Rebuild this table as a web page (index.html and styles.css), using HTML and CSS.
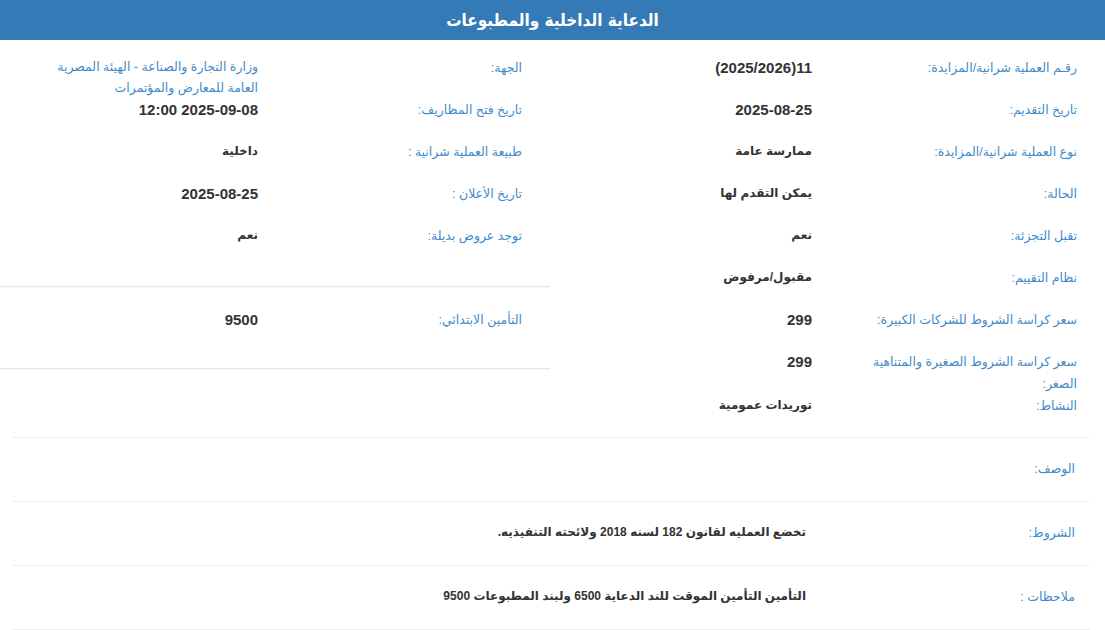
FILE: index.html
```html
<!DOCTYPE html>
<html lang="ar" dir="rtl">
<head>
<meta charset="utf-8">
<title>الدعاية الداخلية والمطبوعات</title>
<link rel="stylesheet" href="styles.css">
</head>
<body>
<header class="title-bar">الدعاية الداخلية والمطبوعات</header>
<main class="details">
  <div class="cols">
    <section class="col col-start">
      <div class="row"><div class="label">رقـم العملية شرانية/المزايدة:</div><div class="value num">11(2025/2026)</div></div>
      <div class="row"><div class="label">تاريخ التقديم:</div><div class="value num">2025-08-25</div></div>
      <div class="row"><div class="label">نوع العملية شرانية/المزايدة:</div><div class="value">ممارسة عامة</div></div>
      <div class="row"><div class="label">الحالة:</div><div class="value">يمكن التقدم لها</div></div>
      <div class="row"><div class="label">تقبل التجزئة:</div><div class="value">نعم</div></div>
      <div class="row"><div class="label">نظام التقييم:</div><div class="value">مقبول/مرفوض</div></div>
      <div class="row"><div class="label">سعر كراسة الشروط للشركات الكبيرة:</div><div class="value num">299</div></div>
      <div class="row"><div class="label">سعر كراسة الشروط الصغيرة والمتناهية الصغر:</div><div class="value num">299</div></div>
      <div class="row"><div class="label">النشاط:</div><div class="value">توريدات عمومية</div></div>
    </section>
    <section class="col col-end">
      <div class="row"><div class="label">الجهة:</div><div class="value org">وزارة التجارة والصناعة - الهيئة المصرية العامة للمعارض والمؤتمرات</div></div>
      <div class="row"><div class="label">تاريخ فتح المظاريف:</div><div class="value num">2025-09-08 12:00</div></div>
      <div class="row"><div class="label">طبيعة العملية شرانية :</div><div class="value">داخلية</div></div>
      <div class="row"><div class="label">تاريخ الأعلان :</div><div class="value num">2025-08-25</div></div>
      <div class="row"><div class="label">توجد عروض بديلة:</div><div class="value">نعم</div></div>
      <hr class="sep">
      <div class="row"><div class="label">التأمين الابتدائي:</div><div class="value num">9500</div></div>
      <hr class="sep">
    </section>
  </div>
  <section class="wide">
    <div class="wide-row"><div class="label">الوصف:</div><div class="value"></div></div>
    <div class="wide-row"><div class="label">الشروط:</div><div class="value">تخضع العمليه لقانون 182 لسنه 2018 ولائحته التنفيذيه.</div></div>
    <div class="wide-row"><div class="label">ملاحظات :</div><div class="value">التأمين التأمين الموقت للند الدعاية 6500 ولبند المطبوعات 9500</div></div>
  </section>
</main>
</body>
</html>
```

FILE: styles.css
```css
* { box-sizing: border-box; }

body {
  margin: 0;
  background: #fff;
  color: #333;
  font-family: "Liberation Sans", "DejaVu Sans", Arial, sans-serif;
  font-size: 13px;
}

.title-bar {
  height: 40px;
  background: #337ab7;
  color: #fff;
  text-align: center;
  font-family: "DejaVu Sans Condensed", "DejaVu Sans", sans-serif;
  font-weight: bold;
  font-size: 17px;
  line-height: 40px;
}

.cols {
  display: grid;
  grid-template-columns: 555px 550px;
  padding-top: 17px;
}

.col-start { padding-right: 28px; }
.col-end .row { padding-right: 28px; }

.row {
  display: grid;
  grid-template-columns: 265px 1fr;
  align-items: start;
  min-height: 42px;
  line-height: 21px;
}

.col-end .row { grid-template-columns: 264px 1fr; }

.label {
  color: #428bca;
  font-size: 12.5px;
  padding-left: 40px;
  line-height: 22px;
}

.value {
  font-weight: bold;
  font-size: 12px;
  color: #333;
}

.value.num { font-size: 15px; }

.value.org {
  font-weight: normal;
  font-size: 12.5px;
  color: #428bca;
  padding-left: 48px;
}

.sep {
  margin: 19px 0 21px;
  border: 0;
  border-top: 1px solid #e6e6e6;
  border-bottom: 1px solid #f6f6f6;
  height: 0;
}

.col-end .sep:last-child { margin-bottom: 0; margin-top: 17px; }

.wide {
  margin: 0 15px 0 12px;
  border-top: 1px solid #eee;
}

.wide-row {
  display: grid;
  grid-template-columns: 269px 1fr;
  padding: 20px 15px 20px 0;
  min-height: 64px;
  line-height: 21px;
  border-bottom: 1px solid #eee;
}

.wide-row .label { padding-left: 0; }
.wide-row .value { font-size: 12px; }
```
